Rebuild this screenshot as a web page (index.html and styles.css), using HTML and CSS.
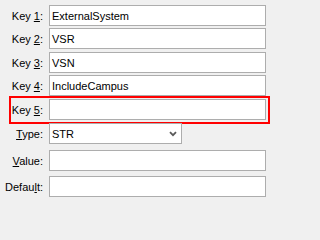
FILE: index.html
```html
<!DOCTYPE html>
<html>
<head>
<meta charset="utf-8">
<link rel="stylesheet" href="styles.css">
</head>
<body>
<div class="form">
  <div class="row">
    <span class="lbl">Key <u>1</u>:</span>
    <div class="field">ExternalSystem</div>
  </div>
  <div class="row g2">
    <span class="lbl">Key <u>2</u>:</span>
    <div class="field">VSR</div>
  </div>
  <div class="row g3">
    <span class="lbl">Key <u>3</u>:</span>
    <div class="field">VSN</div>
  </div>
  <div class="row g2">
    <span class="lbl">Key <u>4</u>:</span>
    <div class="field">IncludeCampus</div>
  </div>
  <div class="row g3 highlight">
    <span class="lbl">Key <u>5</u>:</span>
    <div class="field"></div>
  </div>
  <div class="row g3">
    <span class="lbl"><u>T</u>ype:</span>
    <div class="field select">
      <span>STR</span>
      <svg class="chev" width="8" height="6" viewBox="0 0 8 6"><path d="M1 1.2 L4 4.2 L7 1.2" fill="none" stroke="#5a5a5a" stroke-width="1.8"/></svg>
    </div>
  </div>
  <div class="row g6">
    <span class="lbl"><u>V</u>alue:</span>
    <div class="field"></div>
  </div>
  <div class="row g5">
    <span class="lbl">Defau<u>l</u>t:</span>
    <div class="field"></div>
  </div>
</div>
</body>
</html>
```
FILE: styles.css
```css
html, body {
  margin: 0;
  padding: 0;
  background: #f0f0f0;
}
body {
  width: 271px;
  height: 202px;
  overflow: hidden;
  font-family: "Liberation Sans", Arial, sans-serif;
  font-size: 11px;
  color: #000;
}
.form {
  display: flex;
  flex-direction: column;
  padding: 5px 5px 0 0;
}
.row {
  display: flex;
  align-items: center;
  height: 21px;
  column-gap: 6px;
  position: relative;
}
.g2 { margin-top: 2px; }
.g3 { margin-top: 3px; }
.g5 { margin-top: 5px; }
.g6 { margin-top: 6px; }
.lbl {
  width: 43px;
  flex: none;
  text-align: right;
  white-space: nowrap;
}
.lbl u {
  text-underline-offset: 1px;
}
.field {
  flex: 1;
  height: 21px;
  box-sizing: border-box;
  border: 1px solid #adadad;
  background: #fff;
  padding: 0 2px;
  display: flex;
  align-items: center;
  white-space: nowrap;
}
.select {
  flex: none;
  width: 133px;
  justify-content: space-between;
  padding-right: 4px;
}
.chev {
  display: block;
}
.highlight::after {
  content: "";
  position: absolute;
  left: 9px;
  top: -3px;
  width: 261px;
  height: 28px;
  box-sizing: border-box;
  border: 2px solid #ff0000;
  pointer-events: none;
}
```
